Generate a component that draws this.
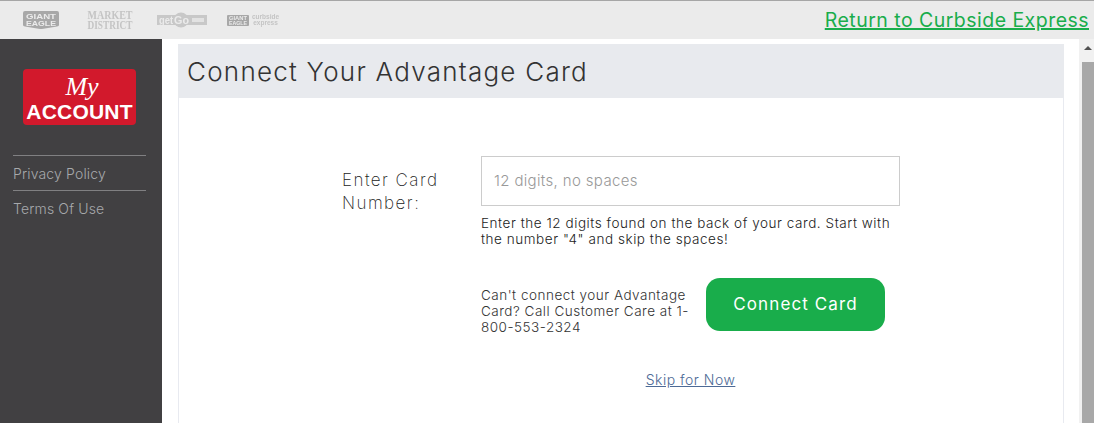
<div class="page">
  <header class="topbar">
    <div class="brands">
      <svg class="brand" width="40" height="20" viewBox="0 0 40 20">
        <path d="M4 1 H36 Q38 1 38 3 V15 Q38 16 36 16.5 L21 19 Q20 19.2 19 19 L4 16.5 Q2 16 2 15 V3 Q2 1 4 1Z" fill="#a8a8a8" />
        <text x="20" y="8.5" text-anchor="middle" textLength="30" lengthAdjust="spacingAndGlyphs" class="logo-eagle">GIANT</text>
        <text x="20" y="15.5" text-anchor="middle" textLength="30" lengthAdjust="spacingAndGlyphs" class="logo-eagle">EAGLE</text>
      </svg>
      <svg class="brand market" width="46" height="20" viewBox="0 0 46 20">
        <text x="0.5" y="9" textLength="45" lengthAdjust="spacingAndGlyphs" class="logo-market">MARKET</text>
        <text x="0.5" y="18.5" textLength="45" lengthAdjust="spacingAndGlyphs" class="logo-market">DISTRICT</text>
      </svg>
      <svg class="brand getgo" width="52" height="16" viewBox="0 0 52 16">
        <rect x="0" y="3" width="50" height="10" fill="#c8c8c8" />
        <circle cx="24" cy="8" r="7.5" fill="#c8c8c8" />
        <text x="2" y="11.5" textLength="14" lengthAdjust="spacingAndGlyphs" class="logo-getgo">get</text>
        <text x="17" y="11.5" textLength="15" lengthAdjust="spacingAndGlyphs" class="logo-getgo">Go</text>
        <rect x="35" y="6" width="12" height="4" fill="#e2e2e2" />
      </svg>
      <div class="curbside">
        <svg width="22" height="11" viewBox="0 0 22 11">
          <rect width="22" height="11" rx="1" fill="#a8a8a8" />
          <text x="11" y="5" text-anchor="middle" textLength="18" lengthAdjust="spacingAndGlyphs" class="logo-tiny">GIANT</text>
          <text x="11" y="10" text-anchor="middle" textLength="18" lengthAdjust="spacingAndGlyphs" class="logo-tiny">EAGLE</text>
        </svg>
        <span>curbside<br />express</span>
      </div>
    </div>
    <a class="return" href="#top">Return to Curbside Express</a>
  </header>

  <div class="body">
    <aside class="sidebar">
      <div class="account-logo">
        <span class="my">My</span>
        <span class="account">ACCOUNT</span>
      </div>
      <nav class="side-nav">
        <a href="#top">Privacy Policy</a>
        <a href="#top">Terms Of Use</a>
      </nav>
    </aside>

    <main class="content">
      <section class="panel">
        <h1>Connect Your Advantage Card</h1>
        <div class="form">
          <label for="card">Enter Card Number:</label>
          <div class="fields">
            <input id="card" type="text" placeholder="12 digits, no spaces" />
            <p class="help">Enter the 12 digits found on the back of your card. Start with the number "4" and skip the spaces!</p>
            <div class="actions">
              <p class="care">Can't connect your Advantage Card? Call Customer Care at 1-800-553-2324</p>
              <button type="button">Connect Card</button>
            </div>
            <a class="skip" href="#top">Skip for Now</a>
          </div>
        </div>
      </section>
    </main>

    <div class="scrollbar">
      <span class="arrow"></span>
      <span class="thumb"></span>
    </div>
  </div>
</div>

<style>
  :global(body) {
    margin: 0;
    overflow: hidden;
    background: #fff;
  }

  .page {
    height: 423px;
    display: flex;
    flex-direction: column;
    overflow: hidden;
    font-family: Inter, "Open Sans", sans-serif;
    color: #333;
  }

  .topbar {
    height: 38px;
    flex: none;
    display: flex;
    align-items: center;
    justify-content: space-between;
    background: #ebebeb;
    border-top: 1px solid #a6a6a6;
    padding: 0 5px 0 21px;
  }

  .brands {
    display: flex;
    align-items: center;
    filter: blur(0.4px);
  }

  .brand {
    display: block;
    overflow: visible;
  }

  .logo-eagle {
    font: 800 7.5px "Liberation Sans", sans-serif;
    fill: #ebebeb;
  }

  .logo-market {
    font: 700 11.5px "Liberation Serif", serif;
    fill: #c4c4c4;
  }

  .logo-getgo {
    font: 700 10.5px "Liberation Sans", sans-serif;
    fill: #ebebeb;
  }

  .logo-tiny {
    font: 800 5px "Liberation Sans", sans-serif;
    fill: #ebebeb;
  }

  .market {
    margin: 0 24px 0 26px;
  }

  .curbside {
    margin-left: 18px;
    display: flex;
    align-items: center;
    gap: 3px;
    font: 700 6.5px/6.5px "Liberation Sans", sans-serif;
    color: #c4c4c4;
    text-align: center;
  }

  .return {
    font-size: 19.5px;
    font-weight: 400;
    letter-spacing: 0.47px;
    color: #19ad4b;
    white-space: nowrap;
    text-decoration-thickness: 2px;
  }

  .body {
    flex: 1;
    min-height: 0;
    display: flex;
  }

  .sidebar {
    width: 162px;
    flex: none;
    box-sizing: border-box;
    background: #414042;
    padding: 30px 13px 0;
  }

  .account-logo {
    width: 113px;
    height: 56px;
    margin: 0 0 0 10px;
    border-radius: 4px;
    background: #d2192c;
    color: #fff;
    display: flex;
    flex-direction: column;
    align-items: center;
    overflow: hidden;
  }

  .my {
    font: italic 400 26px/26px "Liberation Serif", serif;
    margin-top: 5px;
    margin-left: 5px;
  }

  .account {
    font: 800 21px/20px "Liberation Sans", sans-serif;
    letter-spacing: 0.2px;
    margin-top: 2px;
  }

  .side-nav {
    margin-top: 30px;
    width: 133px;
  }

  .side-nav a {
    display: block;
    height: 34px;
    border-top: 1px solid #808082;
    font-size: 14px;
    font-weight: 300;
    line-height: 35px;
    letter-spacing: 0.15px;
    color: #a7a9ac;
    text-decoration: none;
  }

  .content {
    flex: 1;
    min-width: 0;
    padding: 5px 15px 0 16px;
  }

  .panel {
    height: 400px;
    box-sizing: border-box;
    border: 1px solid #e8eaf0;
    border-top: 0;
  }

  h1 {
    margin: 0 -1px;
    height: 54px;
    background: #e8eaee;
    padding-left: 9px;
    font-size: 26px;
    font-weight: 300;
    line-height: 55px;
    letter-spacing: 1.25px;
    color: #333;
    white-space: nowrap;
  }

  .form {
    display: flex;
    padding: 58px 0 0 163px;
  }

  label {
    width: 139px;
    flex: none;
    padding-top: 13px;
    padding-right: 20px;
    box-sizing: border-box;
    font-size: 17px;
    font-weight: 200;
    line-height: 23px;
    letter-spacing: 1.45px;
    color: #222;
  }

  .fields {
    width: 419px;
  }

  input {
    display: block;
    width: 100%;
    height: 50px;
    box-sizing: border-box;
    border: 1px solid #ccc;
    padding: 0 12px 2px;
    font: 300 15px Inter, sans-serif;
    letter-spacing: 0.35px;
    outline: none;
  }

  input::placeholder {
    color: #999;
    opacity: 1;
  }

  .help {
    margin: 9px 0 0;
    font-size: 13.5px;
    font-weight: 300;
    line-height: 16px;
    letter-spacing: 0.55px;
    color: #222;
  }

  .actions {
    display: flex;
    align-items: flex-start;
    gap: 15px;
    margin-top: 31px;
  }

  .care {
    width: 210px;
    margin: 9px 0 0;
    flex: none;
    font-size: 13.5px;
    font-weight: 300;
    line-height: 16px;
    letter-spacing: 0.5px;
    color: #333;
  }

  button {
    width: 179px;
    height: 53px;
    flex: none;
    border: 0;
    border-radius: 14px;
    padding-bottom: 3px;
    background: #19ad4b;
    color: #fff;
    font: 400 17px Inter, sans-serif;
    letter-spacing: 1.1px;
  }

  .skip {
    display: block;
    margin-top: 36px;
    text-align: center;
    font-size: 14px;
    font-weight: 300;
    letter-spacing: 0.5px;
    color: #4d6a96;
  }

  .scrollbar {
    width: 15px;
    box-sizing: border-box;
    flex: none;
    padding-left: 3px;
    background: #f1f1f1;
    display: flex;
    flex-direction: column;
    align-items: center;
  }

  .arrow {
    margin-top: 7px;
    border: 4px solid transparent;
    border-top: 0;
    border-bottom: 4px solid #505050;
  }

  .thumb {
    width: 100%;
    flex: 1;
    margin-top: 12px;
    background: #a8a8a8;
  }
</style>
